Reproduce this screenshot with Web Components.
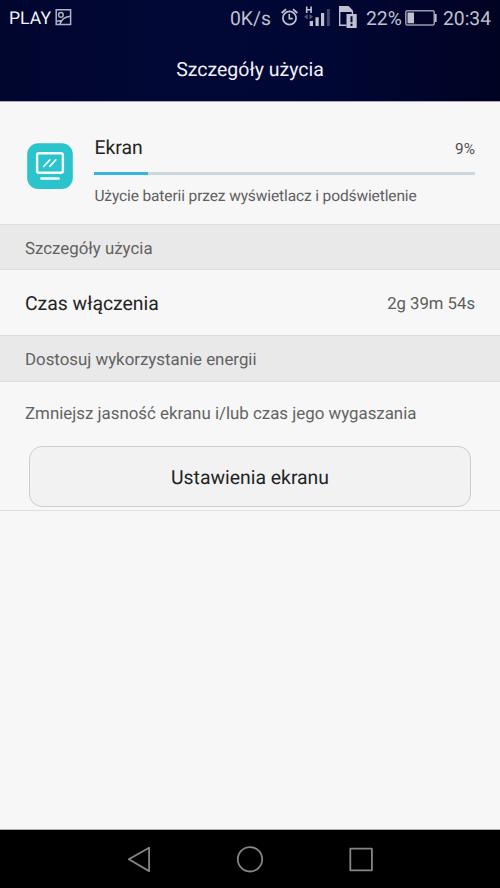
<!DOCTYPE html>
<html lang="pl">
<head>
<meta charset="utf-8">
<title>Szczegóły użycia</title>
<style>
html,body{margin:0;height:100%}
body{font-family:Roboto,"Noto Sans",sans-serif;background:#f7f7f7;overflow:hidden;text-rendering:geometricPrecision}
</style>
</head>
<body>
<usage-screen></usage-screen>
<script>
function define(name, html) {
  const t = document.createElement('template');
  t.innerHTML = html;
  customElements.define(name, class extends HTMLElement {
    constructor() {
      super();
      this.attachShadow({mode: 'open'}).append(t.content.cloneNode(true));
    }
  });
}

define('status-bar', `
<style>
:host{display:flex;align-items:center;height:36px;padding:0 9px;box-sizing:border-box;color:#c0c1d0;font-size:19.3px;line-height:36px;white-space:nowrap}
.carrier{color:#f2f2f8;font-size:17.6px;width:46px}
svg{flex:none;display:block}
.speed{margin-left:auto;width:50px;text-align:left}
.pct{width:39px;text-align:left}
.time{width:48px;text-align:left}
span{padding-top:1px}
</style>
<span class="carrier">PLAY</span>
<svg width="17" height="36" viewBox="55 0 17 36" fill="none" stroke="#aeb3c5" stroke-width="1.5"><path d="M56.2 9.8H70.6V24.4H56.2Z"/><circle cx="60.9" cy="14.9" r="2.3"/><path d="M60 24C61 20 65 16.5 70.5 16.2M57 21.3 61.8 20.4" stroke-width="1.5"/></svg>
<span class="speed">0K/s</span>
<svg width="86" height="36" viewBox="280 0 86 36" fill="none" stroke="#c0c1d0">
<circle cx="289.5" cy="18" r="6.6" stroke-width="1.7"/><path d="M289.3 14V18.6H292.8" stroke-width="1.6"/><path d="M281.7 13 286 9.2M293 9.2 297.3 13" stroke-width="1.8"/>
<path d="M306.7 6.5V13M311.1 6.5V13M306.7 9.8H311.1" stroke-width="1.6"/>
<path d="M307.6 14 304.2 16.8 307.6 19.6ZM309.6 14 313 16.8 309.6 19.6Z" fill="#565878" stroke="none"/>
<path d="M309.7 21H313V26H309.7ZM315.5 17.3H318.7V26H315.5ZM321 13H324.2V26H321Z" fill="#c0c1d0" stroke="none"/><path d="M326.8 9H329.9V26H326.8Z" fill="#42446a" stroke="none"/>
<path d="M339.7 10V25.2H346.5M352.4 14.5V11" stroke-width="1.4"/>
<path d="M339 6H348.5L353 10.5V12H339Z" fill="#c0c1d0" stroke="none"/>
<path d="M346.5 14H356.7V28H346.5Z" fill="#c0c1d0" stroke="none"/><path d="M351.5 16.3V22.3M351.5 23.8V26" stroke="#03062d" stroke-width="2"/>
</svg>
<span class="pct">22%</span>
<svg width="38" height="36" viewBox="405 0 38 36"><rect x="405.8" y="10.7" width="28.4" height="14.4" rx="1.5" fill="none" stroke="#9a9bae" stroke-width="1.5"/><path d="M407.5 12.5H414V23.3H407.5Z" fill="#c0c1d0"/><path d="M434.8 14H436.6V22H434.8Z" fill="#c0c1d0"/></svg>
<span class="time">20:34</span>`);

define('title-bar', `
<style>
:host{display:flex;justify-content:center;height:66px;line-height:67px;color:#f2f2f6;font-size:19.5px;box-sizing:border-box;border-bottom:1px solid #a9a8bc}
</style><slot></slot>`);

define('screen-icon', `
<style>:host{display:block;width:46px;height:46px}svg{display:block}</style>
<svg width="46" height="46" viewBox="0 0 46 46" fill="none" stroke="#f5ffff" stroke-linecap="round">
<rect x=".2" y=".2" width="45.6" height="45.8" rx="11" fill="#2bc4cc" stroke="none"/>
<rect x="10.1" y="10.2" width="25.8" height="19.6" rx="2" stroke-width="2.4"/>
<path d="M14.5 35.5H31.5" stroke-width="2.7"/><path d="M16.8 23.4 22.7 17M22.8 23.4 28.7 17" stroke-width="1.8"/></svg>`);

define('usage-item', `
<style>
:host{display:grid;grid-template-columns:46px 380.6px;column-gap:21.4px;height:122px;padding:0 25px 0 27px;box-sizing:border-box}
screen-icon{margin-top:41px}
.head{display:flex;justify-content:space-between;align-items:center;height:24px;margin-top:33px;color:#242424;font-size:19.4px}
.val{font-size:15.4px;color:#505050;padding-top:3px}
.bar{height:2.6px;margin-top:13.4px;background:#cbd8de}
.fill{height:100%;width:54px;background:#35b5e0}
.desc{margin-top:10px;line-height:22px;font-size:15.5px;letter-spacing:-.12px;color:#606060;white-space:nowrap}
</style>
<screen-icon></screen-icon>
<div><div class="head"><slot name="name"></slot><span class="val"><slot name="value"></slot></span></div>
<div class="bar"><div class="fill"></div></div>
<div class="desc"><slot name="desc"></slot></div></div>`);

define('section-heading', `
<style>
:host{display:flex;align-items:center;height:var(--h,46px);box-sizing:border-box;padding:3px 25px 0;background:#e9e9e9;border:solid #dedede;border-width:1px 0;color:#626262;font-size:16.85px;white-space:nowrap}
</style><slot></slot>`);

define('value-row', `
<style>
:host{display:flex;align-items:center;justify-content:space-between;height:65px;padding:2px 25px 0;box-sizing:border-box;font-size:19.4px;color:#242424}
.v{font-size:16.7px;color:#5c5c5c;padding-top:2px}
</style><slot></slot><span class="v"><slot name="value"></slot></span>`);

define('tip-block', `
<style>
:host{display:flex;flex-direction:column;height:129px;box-sizing:border-box;border-bottom:1px solid #dfdfdf}
p{margin:21px 25px 0;line-height:22px;height:22px;font-size:16.87px;color:#646464;white-space:nowrap}
</style><p><slot></slot></p><slot name="action"></slot>`);

define('outline-button', `
<style>
:host{display:block;margin:21px 29px 0}
button{display:block;width:100%;height:61px;box-sizing:border-box;border:1px solid #cdcdcd;border-radius:13px;background:#f2f2f2;color:#242424;font:19.4px Roboto,"Noto Sans",sans-serif;text-rendering:inherit;padding:1px 0 0}
</style><button><slot></slot></button>`);

define('nav-bar', `
<style>
:host{display:flex;justify-content:center;height:59px;margin-top:auto;background:#000;border-top:1px solid #aaa;box-sizing:border-box}
</style>
<svg width="300" height="58" viewBox="100 830 300 58" fill="none" stroke="#858585" stroke-width="1.8" stroke-linejoin="round"><path d="M128.8 859.3 149.1 847.7V871.1Z"/><circle cx="250" cy="859.3" r="12.2"/><rect x="350.3" y="848.7" width="21.6" height="21.6"/></svg>`);

define('usage-screen', `
<style>
:host{display:flex;flex-direction:column;width:500px;height:888px;background:#f7f7f7}
header{background:linear-gradient(90deg,#01062f 0,#010835 35%,#010734 65%,#01052b 85%,#010322)}
</style>
<header><status-bar></status-bar><title-bar>Szczegóły użycia</title-bar></header>
<usage-item><span slot="name">Ekran</span><span slot="value">9%</span><span slot="desc">Użycie baterii przez wyświetlacz i podświetlenie</span></usage-item>
<section-heading>Szczegóły użycia</section-heading>
<value-row>Czas włączenia<span slot="value">2g 39m 54s</span></value-row>
<section-heading style="--h:47px">Dostosuj wykorzystanie energii</section-heading>
<tip-block>Zmniejsz jasność ekranu i/lub czas jego wygaszania<outline-button slot="action">Ustawienia ekranu</outline-button></tip-block>
<nav-bar></nav-bar>`);
</script>
</body>
</html>
